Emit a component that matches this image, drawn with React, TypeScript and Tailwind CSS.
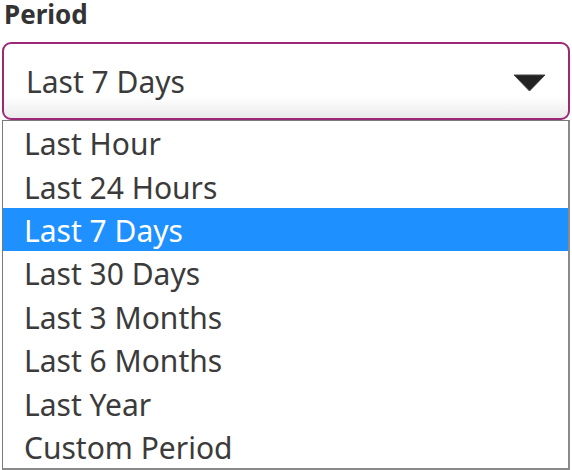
import React, { useState } from 'react';

const periods = [
  'Last Hour',
  'Last 24 Hours',
  'Last 7 Days',
  'Last 30 Days',
  'Last 3 Months',
  'Last 6 Months',
  'Last Year',
  'Custom Period',
];

const App: React.FC = () => {
  const [selected, setSelected] = useState('Last 7 Days');

  return (
    <div
      className="relative w-[572px] h-[470px] overflow-hidden bg-white text-[#3b3b3b]"
      style={{ fontFamily: '"Noto Sans", "Open Sans", sans-serif' }}
    >
      <label className="block pl-[4px] pt-[1px] h-[28px] text-[26px] leading-[27px] font-bold text-[#333]">Period</label>

      <div className="mx-[2px] mt-[14px] h-[78px] rounded-[9px] border-2 border-[#9c2878] bg-gradient-to-b from-white from-70% to-[#ebebeb] flex items-center justify-between pl-[22px] pr-[22px]">
        <span className="text-[30px] leading-none pt-[2px]">{selected}</span>
        <svg width="33" height="18" viewBox="0 0 33 18" className="mt-[3px]">
          <path d="M1 1 L32 1 L16.5 17 Z" fill="#222" stroke="#444" strokeWidth="1" strokeLinejoin="round" />
        </svg>
      </div>

      <ul className="mx-[2px] w-[568px] border border-[#7a7a7a] border-r-2 border-b-2 border-r-[#8a8a8a] border-b-[#8a8a8a] bg-white">
        {periods.map((p) => (
          <li
            key={p}
            onClick={() => setSelected(p)}
            className={`h-[43.4px] flex items-center pl-[21px] pt-[3px] text-[30px] leading-none cursor-default ${
              p === selected ? 'bg-[#1e90ff] text-white' : 'text-[#3b3b3b]'
            }`}
          >
            {p}
          </li>
        ))}
      </ul>
    </div>
  );
};

export default App;
